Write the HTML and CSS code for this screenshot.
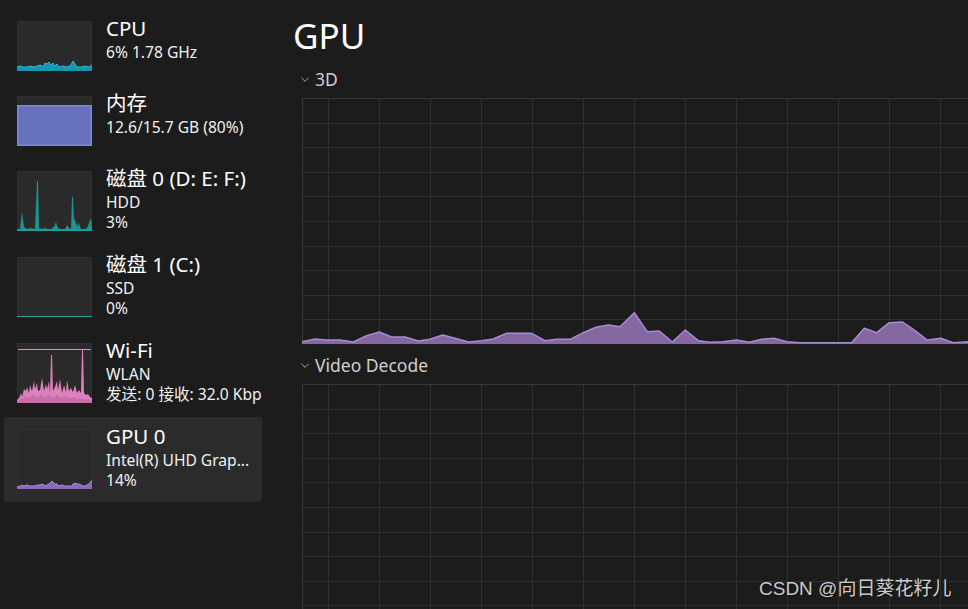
FILE: index.html
```html
<!DOCTYPE html>
<html lang="zh-CN">
<head>
<meta charset="utf-8">
<title>GPU</title>
<link rel="stylesheet" href="styles.css">
</head>
<body>
<div class="app">
  <nav class="sidebar">
    <div class="item item-short">
      <div class="thumb thumb-short">
        <svg width="75" height="50" viewBox="0 0 75 50">
          <polygon class="cpu-fill" points="0,46 3,45 6,46 10,46 13,45 17,46 20,45 24,44 26,46 28,42 30,43 32,41 34,44 36,42 38,45 40,43 42,46 46,45 50,46 53,45 55,42 56,40 58,43 60,46 64,46 68,45 72,46 75,44 75,50 0,50"/>
          <polyline class="cpu-line" points="0,46 3,45 6,46 10,46 13,45 17,46 20,45 24,44 26,46 28,42 30,43 32,41 34,44 36,42 38,45 40,43 42,46 46,45 50,46 53,45 55,42 56,40 58,43 60,46 64,46 68,45 72,46 75,44"/>
        </svg>
      </div>
      <div class="info">
        <div class="name">CPU</div>
        <div class="sub">6% 1.78 GHz</div>
      </div>
    </div>
    <div class="item item-short">
      <div class="thumb thumb-short">
        <svg width="75" height="50" viewBox="0 0 75 50">
          <rect class="mem-fill" x="0.75" y="9.75" width="73.5" height="39.5"/>
        </svg>
      </div>
      <div class="info">
        <div class="name">内存</div>
        <div class="sub">12.6/15.7 GB (80%)</div>
      </div>
    </div>
    <div class="item item-tall">
      <div class="thumb thumb-tall">
        <svg width="75" height="60" viewBox="0 0 75 60">
          <polygon class="disk-fill" points="0,58 3,58 5,41 7,56 10,58 14,57 18,58 20,10 21,10 22,57 25,58 28,57 31,58 34,58 37,56 39,51 41,57 44,58 48,58 50,54 52,57 54,58 55,26 56,26 57,50 58,47 59,55 60,51 61,56 62,52 64,58 67,58 70,57 72,52 74,47 75,56 75,60 0,60"/>
          <line class="disk-line" x1="0" y1="59.5" x2="75" y2="59.5"/>
        </svg>
      </div>
      <div class="info">
        <div class="name">磁盘 0 (D: E: F:)</div>
        <div class="sub">HDD</div>
        <div class="sub">3%</div>
      </div>
    </div>
    <div class="item item-tall">
      <div class="thumb thumb-tall">
        <svg width="75" height="60" viewBox="0 0 75 60">
          <line class="disk-line" x1="0" y1="59.5" x2="75" y2="59.5"/>
        </svg>
      </div>
      <div class="info">
        <div class="name">磁盘 1 (C:)</div>
        <div class="sub">SSD</div>
        <div class="sub">0%</div>
      </div>
    </div>
    <div class="item item-tall">
      <div class="thumb thumb-tall">
        <svg width="75" height="60" viewBox="0 0 75 60">
          <line class="wifi-line" x1="1" y1="6.5" x2="74" y2="6.5"/>
          <polygon class="wifi-fill" points="0,57 2,55 4,50 5,54 7,46 9,48 10,44 12,50 13,42 15,48 17,38 18,46 20,40 21,48 23,47 25,35 27,48 29,41 30,46 32,38 33,50 34,12 35,12 36,48 38,44 40,38 41,47 43,36 45,50 47,42 49,49 50,37 52,48 54,45 56,49 58,42 60,50 62,47 64,50 65,6 66,6 67,50 69,52 71,51 73,54 75,55 75,60 0,60"/>
          <polygon class="wifi-send" points="0,58 4,56 8,53 12,55 16,52 20,55 24,51 28,54 32,52 36,55 40,52 44,55 48,53 52,55 56,54 60,56 64,55 68,57 72,56 75,58 75,60 0,60"/>
        </svg>
      </div>
      <div class="info">
        <div class="name">Wi-Fi</div>
        <div class="sub">WLAN</div>
        <div class="sub">发送: 0 接收: 32.0 Kbp</div>
      </div>
    </div>
    <div class="item item-tall selected">
      <div class="thumb thumb-tall">
        <svg width="75" height="60" viewBox="0 0 75 60">
          <polygon class="gpu-fill" points="0,58 3,57 5,56 7,57 10,56 13,57 15,57 17,57 20,56 23,56 26,55 28,57 30,56 32,55 34,53 35,52 36,53 38,55 40,55 42,57 45,56 48,57 50,57 52,57 55,57 56,55 58,54 60,55 62,55 64,56 66,57 68,57 70,56 72,55 74,52 75,52 75,60 0,60"/>
          <polyline class="gpu-line" points="0,58 3,57 5,56 7,57 10,56 13,57 15,57 17,57 20,56 23,56 26,55 28,57 30,56 32,55 34,53 35,52 36,53 38,55 40,55 42,57 45,56 48,57 50,57 52,57 55,57 56,55 58,54 60,55 62,55 64,56 66,57 68,57 70,56 72,55 74,52 75,52"/>
        </svg>
      </div>
      <div class="info">
        <div class="name">GPU 0</div>
        <div class="sub">Intel(R) UHD Grap...</div>
        <div class="sub">14%</div>
      </div>
    </div>
  </nav>

  <main class="main">
    <h1 class="title">GPU</h1>

    <div class="section">
      <svg class="chev" width="10" height="6" viewBox="0 0 10 6"><polyline points="0.5,0.5 4.5,4.5 8.5,0.5"/></svg>
      <span class="label">3D</span>
    </div>
    <div class="graph">
      <svg width="700" height="246" viewBox="0 0 700 246">
        <path class="grid" d="M26.5 0V246M77.5 0V246M128.5 0V246M179.5 0V246M230.5 0V246M281.5 0V246M332.5 0V246M383.5 0V246M434.5 0V246M485.5 0V246M536.5 0V246M587.5 0V246M638.5 0V246M689.5 0V246M0 25.5H700M0 49.5H700M0 74.5H700M0 98.5H700M0 123.5H700M0 148.5H700M0 172.5H700M0 197.5H700M0 221.5H700"/>
        <path class="border" d="M0.5 246V0.5H700M0 245.5H700"/>
        <polygon class="data-fill" points="0,243.7 13,241 24.7,242 38,242 51.3,244 64.7,237.7 77.3,234 89.7,239 103,239 116.3,243 128,241.3 140.7,237 153,240.3 166.3,244 179.7,242.7 191.3,241 204.7,235.3 229.7,235.3 243,242.7 254.7,241.3 268,241.3 281.3,234.7 294,229.3 306.3,227 318,228.7 332.3,214.7 345.3,233.7 357.3,233 370.3,244 383.3,232 396.3,242.7 408,244.3 421.3,243.7 434.7,242 447.3,244.3 459.7,241.3 472,240.3 484.7,243.7 498,244.7 549.7,244.7 562.3,230.3 574.7,234.7 587.3,224.7 600.7,224 613,232.7 625.3,242 638.7,240.3 651.3,244.7 666,243.7 700,243.5 700,246 0,246"/>
        <polyline class="data-line" points="0,243.7 13,241 24.7,242 38,242 51.3,244 64.7,237.7 77.3,234 89.7,239 103,239 116.3,243 128,241.3 140.7,237 153,240.3 166.3,244 179.7,242.7 191.3,241 204.7,235.3 229.7,235.3 243,242.7 254.7,241.3 268,241.3 281.3,234.7 294,229.3 306.3,227 318,228.7 332.3,214.7 345.3,233.7 357.3,233 370.3,244 383.3,232 396.3,242.7 408,244.3 421.3,243.7 434.7,242 447.3,244.3 459.7,241.3 472,240.3 484.7,243.7 498,244.7 549.7,244.7 562.3,230.3 574.7,234.7 587.3,224.7 600.7,224 613,232.7 625.3,242 638.7,240.3 651.3,244.7 666,243.7 700,243.5"/>
      </svg>
    </div>

    <div class="section">
      <svg class="chev" width="10" height="6" viewBox="0 0 10 6"><polyline points="0.5,0.5 4.5,4.5 8.5,0.5"/></svg>
      <span class="label">Video Decode</span>
    </div>
    <div class="graph">
      <svg width="700" height="246" viewBox="0 0 700 246">
        <path class="grid" d="M26.5 0V246M77.5 0V246M128.5 0V246M179.5 0V246M230.5 0V246M281.5 0V246M332.5 0V246M383.5 0V246M434.5 0V246M485.5 0V246M536.5 0V246M587.5 0V246M638.5 0V246M689.5 0V246M0 25.5H700M0 49.5H700M0 74.5H700M0 98.5H700M0 123.5H700M0 148.5H700M0 172.5H700M0 197.5H700M0 221.5H700"/>
        <path class="border" d="M0.5 246V0.5H700M0 245.5H700"/>
      </svg>
    </div>
  </main>
</div>
<div class="watermark">CSDN @向日葵花籽儿</div>
</body>
</html>
```

FILE: styles.css
```css
html, body {
  margin: 0;
  padding: 0;
  width: 968px;
  height: 609px;
  overflow: hidden;
  background: #1c1c1c;
}

body {
  position: relative;
  font-family: "Noto Sans", "Noto Sans CJK SC", sans-serif;
  color: #ffffff;
}

.app {
  display: flex;
  height: 609px;
}

/* ---------- sidebar ---------- */
.sidebar {
  flex: 0 0 262px;
  box-sizing: border-box;
  padding: 9px 0 0 4px;
  display: flex;
  flex-direction: column;
}

.item {
  display: flex;
  align-items: flex-start;
  gap: 14px;
  box-sizing: border-box;
  width: 258px;
  padding-left: 13px;
  overflow: hidden;
  border-radius: 2px;
}

.item-short { height: 75px; }
.item-tall { height: 86px; }

.item.selected {
  background: #2b2b2b;
  height: 85px;
}

.thumb {
  flex: 0 0 75px;
  margin-top: 12px;
  background: #2a2a2a;
  box-shadow: inset 0 0 0 1px #303030;
}

.thumb svg { display: block; }
.thumb-short { height: 50px; }
.thumb-tall { height: 60px; }

.info {
  padding-top: 7.5px;
  white-space: nowrap;
}

.name {
  font-size: 20.5px;
  line-height: 22px;
  margin-bottom: 3px;
  color: #ffffff;
}

.sub {
  font-size: 15.6px;
  line-height: 20px;
  color: #f0f0f0;
}

.cpu-fill { fill: #1b93b4; }
.cpu-line { fill: none; stroke: #32b4d8; stroke-width: 1; }
.mem-fill { fill: #6670bb; stroke: #7c88e2; stroke-width: 1.5; }
.disk-fill { fill: #1c9690; }
.disk-line { stroke: #23a19b; stroke-width: 1; }
.wifi-line { stroke: #ea86c6; stroke-width: 1; }
.wifi-fill { fill: #df7fbe; }
.wifi-send { fill: #b96a9f; opacity: 0.7; }
.gpu-fill { fill: #8a6cb4; }
.gpu-line { fill: none; stroke: #a88ad8; stroke-width: 1; }

/* ---------- main ---------- */
.main {
  flex: 1 1 auto;
  min-width: 0;
  overflow: hidden;
  padding: 14px 0 0 31px;
}

.title {
  margin: 0;
  font-size: 35px;
  line-height: 44px;
  font-weight: 400;
  color: #ffffff;
}

.section {
  display: flex;
  align-items: flex-start;
  gap: 5px;
  padding-left: 8px;
  margin: 11px 0 8px;
  height: 21px;
}

.chev {
  display: block;
  margin-top: 8px;
  flex: 0 0 9px;
}

.chev polyline {
  fill: none;
  stroke: #b8b8b8;
  stroke-width: 1;
}

.label {
  font-size: 17.5px;
  line-height: 21px;
  color: #cfcfcf;
}

.graph {
  margin-left: 9px;
  height: 246px;
}

.graph svg { display: block; }

.grid {
  fill: none;
  stroke: #303030;
  stroke-width: 1;
  shape-rendering: crispEdges;
}

.border {
  fill: none;
  stroke: #383838;
  stroke-width: 1;
  shape-rendering: crispEdges;
}

.data-fill { fill: #84689f; }
.data-line { fill: none; stroke: #a68bd4; stroke-width: 1.5; stroke-linejoin: round; }

/* ---------- watermark overlay ---------- */
.watermark {
  position: absolute;
  left: 759px;
  top: 579px;
  font-family: "Liberation Sans", "Noto Sans CJK SC", sans-serif;
  font-size: 19px;
  line-height: 19px;
  color: #cacaca;
  text-shadow: 1px 1px 1px rgba(0, 0, 0, 0.6);
  white-space: nowrap;
}
```
